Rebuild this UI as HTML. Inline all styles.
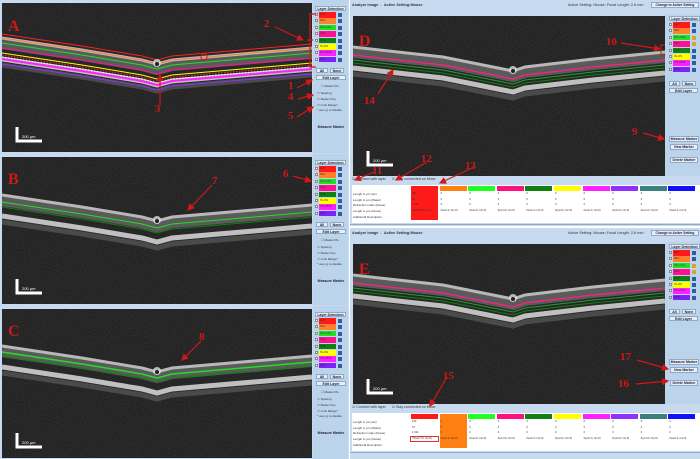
<!DOCTYPE html>
<html><head><meta charset="utf-8">
<style>
*{margin:0;padding:0;box-sizing:border-box}
body{width:700px;height:459px;background:#fff;position:relative;overflow:hidden;font-family:"Liberation Sans",sans-serif}
.a{position:absolute}
.side{background:#bcd3ec;position:absolute}
.btn{position:absolute;background:#e8eef6;border:1px solid #8fa9c8;font-size:3.5px;font-weight:bold;text-align:center;color:#223}
.lbl{position:absolute;font-family:"Liberation Serif",serif;color:#d01818;font-weight:bold}
.t{position:absolute;font-size:3px;color:#333;white-space:nowrap}
</style></head><body>
<svg width="0" height="0" style="position:absolute"><defs>
<filter id="nz" x="0" y="0" width="100%" height="100%"><feTurbulence type="fractalNoise" baseFrequency="1.6" numOctaves="1" seed="3"/><feColorMatrix values="0 0 0 0 0.4  0 0 0 0 0.4  0 0 0 0 0.4  0 0 0 0.9 -0.3"/></filter>
<marker id="ar" markerWidth="6" markerHeight="6" refX="5" refY="3" orient="auto"><path d="M0,0L6,3L0,6z" fill="#d01818"/></marker>
</defs></svg>
<div id="root"></div>
<script>
const R=document.getElementById('root');let h='';
const cols=['#ff1a1a','#ff8030','#20e020','#ff1090','#108010','#ffff00','#ff20ff','#8020ff'];
const names=['ILM','NFL','IPL-GCL','OPL','ONL','IS-OS','OS-RPE','RPE'];
function img(x,y,w,hh,pts,lines,label){
 let s=`<svg class="a" style="left:${x}px;top:${y}px" width="${w}" height="${hh}"><rect width="${w}" height="${hh}" fill="#1a1a1a"/><rect width="${w}" height="${hh}" filter="url(#nz)" opacity=".6"/>`;
 const pl=(o)=>pts.map(p=>p[0]+','+(p[1]+o)).join(' ');
 s+=`<polyline points="${pl(8)}" fill="none" stroke="#707070" stroke-width="12" opacity=".7"/>`;
 s+=`<polyline points="${pl(3)}" fill="none" stroke="#b8b8b8" stroke-width="3"/>`;
 s+=`<polyline points="${pl(24)}" fill="none" stroke="#c0c0c0" stroke-width="5"/>`;
 s+=`<polyline points="${pl(30)}" fill="none" stroke="#5a5a5a" stroke-width="5" opacity=".7"/>`;
 lines.forEach(l=>{s+=`<polyline points="${pl(l[1])}" fill="none" stroke="${l[0]}" stroke-width="${l[2]||1}" ${l[3]?'stroke-dasharray="1.5 1.5"':''}/>`});
 const cx=pts[3][0],cy=pts[3][1];
 s+=`<circle cx="${cx}" cy="${cy+2}" r="4" fill="#ddd" opacity=".8"/><circle cx="${cx}" cy="${cy+3}" r="2" fill="#222"/>`;
 s+=`<text x="6" y="${label[1]}" font-family="Liberation Serif" font-weight="bold" font-size="16" fill="#d01818">${label[0]}</text>`;
 s+=`<path d="M15,${hh-25}V${hh-11}H40" stroke="#fff" stroke-width="3" fill="none"/><text x="20" y="${hh-14}" font-size="4" fill="#fff">200 µm</text></svg>`;
 h+=s;
}
function layerPanel(x,y,pencil){
 let s=`<div class="btn" style="left:${x+2}px;top:${y}px;width:31px;height:5px;line-height:4px">Layer Detection</div>`;
 for(let i=0;i<8;i++){s+=`<div class="a" style="left:${x+2}px;top:${y+7+i*6.4}px;width:3px;height:3px;background:#fff;border:.5px solid #888"></div><div class="a" style="left:${x+6}px;top:${y+6+i*6.4}px;width:17px;height:5.5px;background:${cols[i]};font-size:3px;color:#333;padding-left:1px">${names[i]}</div><div class="a" style="left:${x+25}px;top:${y+7+i*6.4}px;width:4px;height:4px;background:${pencil&&(i==2||i==3)?'#e0a030':'#2d5fa0'}"></div>`}
 return s;
}
function leftPanel(y,hh,label,lines,pts){
 img(2,y+3,310,hh-4,pts,lines,label);
 h+=`<div class="side" style="left:313px;top:${y}px;width:35px;height:${hh}px"></div>`;
 h+=layerPanel(313,y+6,false);
 h+=`<div class="btn" style="left:316px;top:${y+68}px;width:12px;height:5px">All</div><div class="btn" style="left:330px;top:${y+68}px;width:14px;height:5px">None</div><div class="btn" style="left:316px;top:${y+75}px;width:30px;height:5px">Edit Layer</div>`;
 h+=`<div class="t" style="left:321px;top:${y+84}px">☐ Master Pts</div><div class="t" style="left:317px;top:${y+91}px">▭ Spacing</div><div class="t" style="left:317px;top:${y+97}px">▭ Master Key</div><div class="t" style="left:317px;top:${y+103}px">▭ Limit Range*</div><div class="t" style="left:317px;top:${y+108}px">* use [+] to disable</div>`;
 h+=`<div class="btn" style="left:314px;top:${y+125}px;width:34px;height:6px;background:#bcd3ec;border:none">Measure Marker</div>`;
}
const Lp=[[0,32],[80,44],[140,54],[155,58],[170,54],[240,48],[310,42]];
h+=`<div class="a" style="left:0;top:0;width:349px;height:459px;background:#c7daef"></div>`;
leftPanel(0,153,['A',28],[['#ff2020',-1],['#ff8030',3],['#20e020',8],['#ff1090',13],['#ffff00',18,1],['#ff2020',20,1,1],['#ff20ff',24,2],['#ffffff',22,1,1],['#9030ff',29,1]],Lp);
leftPanel(154,151,['B',27],[['#20e020',10],['#108010',15]],Lp.map(p=>[p[0],p[1]+3]));
leftPanel(306,153,['C',27],[['#20e020',9,1.5],['#108010',13]],Lp.map(p=>[p[0],p[1]+2]));
function rightPanel(y,label,E){
 h+=`<div class="a" style="left:350px;top:${y}px;width:350px;height:${E?231:226}px;background:#c7daef"></div>`;
 h+=`<div class="t" style="left:352px;top:${y+3}px;font-size:3.8px;font-weight:bold">Analyze Image &nbsp;- &nbsp;Active Setting:Mouse</div><div class="t" style="left:568px;top:${y+3}px;font-size:3.8px">Active Setting: Mouse; Focal Length: 2.6 mm</div><div class="btn" style="left:651px;top:${y+2}px;width:48px;height:6px;font-size:3.3px">Change to Active Setting</div>`;
 const P=[[0,28],[90,38],[150,50],[160,52],[172,48],[240,40],[312,33]];
 img(353,y+16,312,160,P,[['#20a030',16,1],['#ff2080',11,1.3],['#108010',19,1]],[label,30]);
 h+=`<div class="side" style="left:665px;top:${y+14}px;width:35px;height:162px"></div>`;
 h+=layerPanel(667,y+16,true);
 h+=`<div class="btn" style="left:669px;top:${y+81}px;width:11px;height:5px">All</div><div class="btn" style="left:682px;top:${y+81}px;width:14px;height:5px">None</div><div class="btn" style="left:669px;top:${y+88}px;width:29px;height:5px">Edit Layer</div>`;
 const my=E?y+131:y+136;
 h+=`<div class="btn" style="left:669px;top:${my}px;width:30px;height:6px">Measure Marker</div><div class="btn" style="left:670px;top:${my+8}px;width:28px;height:6px">New Marker</div><div class="btn" style="left:670px;top:${my+21}px;width:28px;height:6px">Delete Marker</div>`;
 const ty=y+177;
 h+=`<div class="t" style="left:352px;top:${ty}px;font-size:3.6px">☑ Connect with layer &nbsp;&nbsp;&nbsp;&nbsp; ☑ Stay connected on Move</div>`;
 h+=`<div class="a" style="left:352px;top:${ty+8}px;width:348px;height:38px;background:#fff"></div>`;
 const cc=['#ff1a1a','#ff8010','#20ff20','#ff1080','#108010','#ffff00','#ff20ff','#9030ff','#3a8080','#1010ff'];
 const rows=['Length in µm (air)','Length in µm (Water)','Refraction index (tissue)','Length in µm (tissue)','Additional Description'];
 const v0=E?['100','76','1.334','75(vert:75, hor:0)','']:['000','00','1.334','75(vert:75, hor:0)',''];
 for(let r=0;r<5;r++)h+=`<div class="t" style="left:353px;top:${ty+15+r*5.7}px;font-size:3px">${rows[r]}</div>`;
 for(let c=0;c<10;c++){const x=411+c*28.6;
  h+=`<div class="a" style="left:${x}px;top:${ty+9}px;width:27px;height:5px;background:${cc[c]}"></div>`;
  const fill=(c==0&&!E)||(c==1&&E);
  if(fill)h+=`<div class="a" style="left:${x}px;top:${ty+14}px;width:27px;height:29px;background:${cc[c]}"></div>`;
  for(let r=0;r<4;r++)h+=`<div class="t" style="left:${x+1}px;top:${ty+15+r*5.7}px;font-size:2.6px">${c==0?v0[r]:(r==3?'0(vert:0, hor:0)':'0')}</div>`;
 }
 if(E)h+=`<div class="a" style="left:410px;top:${ty+31}px;width:29px;height:6px;border:.7px solid #e03030"></div>`;
 h+=`<div class="a" style="left:350px;top:${ty+47}px;width:350px;height:1px;background:#8fa9c8"></div>`;
}
rightPanel(0,'D',false);
rightPanel(228,'E',true);
function arrow(x1,y1,x2,y2,n,lx,ly){h+=`<svg class="a" style="left:0;top:0" width="700" height="459"><line x1="${x1}" y1="${y1}" x2="${x2}" y2="${y2}" stroke="#d01818" stroke-width="1.2" marker-end="url(#ar)"/></svg><div class="lbl" style="left:${lx}px;top:${ly}px;font-size:11px">${n}</div>`}
h+=`<svg class="a" style="left:0;top:0" width="700" height="459"><path d="M316,14H310V67H316M307,40H313" stroke="#d01818" fill="none" stroke-width="1.2"/><circle cx="204" cy="57" r="3" stroke="#d01818" fill="none"/><path d="M665,45H661V55H665" stroke="#d01818" fill="none"/></svg>`;
arrow(275,27,303,40,'2',264,18);arrow(297,88,312,80,'1',288,80);arrow(298,99,313,95,'4',288,91);arrow(297,117,313,107,'5',288,110);
arrow(160,105,160,75,'3',155,103);arrow(212,185,188,210,'7',212,175);arrow(201,341,182,360,'8',199,331);arrow(293,176,311,181,'6',283,168);
arrow(621,43,660,49,'10',606,36);arrow(643,133,664,139,'9',632,126);arrow(378,94,393,70,'14',364,95);
arrow(374,172,355,180,'11',372,165);arrow(427,162,396,180,'12',421,153);arrow(474,167,440,183,'13',465,160);
arrow(447,377,430,406,'15',443,370);arrow(637,360,668,369,'17',620,351);arrow(636,384,668,381,'16',618,378);
R.innerHTML=h;
</script>
</body></html>
